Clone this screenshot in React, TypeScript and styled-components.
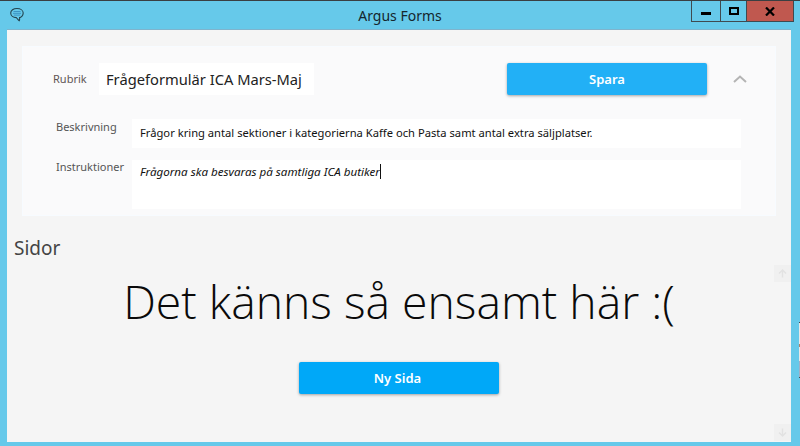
import React from "react";
import styled, { createGlobalStyle } from "styled-components";

const Global = createGlobalStyle`
  html, body { margin: 0; padding: 0; width: 800px; height: 446px; overflow: hidden; }
  body { font-family: "Noto Sans", "Open Sans", sans-serif; }
`;

const Frame = styled.div`
  position: relative;
  box-sizing: border-box;
  width: 800px;
  height: 446px;
  background: #66c9ea;
  border-top: 1px solid #3a3f42;
  display: flex;
  flex-direction: column;
  overflow: hidden;
`;

const EdgeSliver = styled.div`
  position: absolute;
  right: 0;
  top: 321px;
  width: 1px;
  height: 56px;
  box-sizing: border-box;
  background: linear-gradient(#e8e8e8 0 38%, #b0806a 38% 44%, #e8e8e8 44% 70%, #9fb0c8 70%);
  border-top: 1px solid #3f4a50;
  border-bottom: 1px solid #3f4a50;
`;

const TitleBar = styled.header`
  height: 29px;
  flex: none;
  display: grid;
  grid-template-columns: 1fr auto 1fr;
  align-items: start;
`;

const AppIcon = styled.svg`
  width: 16px;
  height: 16px;
  margin: 6px 0 0 9px;
  display: block;
`;

const Title = styled.div`
  font-size: 14px;
  line-height: 18px;
  margin-top: 6px;
  color: #15262e;
`;

const Controls = styled.div`
  justify-self: end;
  margin-right: 6px;
  display: flex;
  height: 21px;
  box-sizing: border-box;
  border: 1px solid #3f4a50;
  border-top: none;
`;

const Control = styled.div<{ $w: number; $close?: boolean }>`
  box-sizing: border-box;
  width: ${(p) => p.$w}px;
  background: ${(p) => (p.$close ? "#c0584f" : "transparent")};
  display: flex;
  align-items: center;
  justify-content: center;
  & + & { border-left: 1px solid #3f4a50; }
`;

const MinGlyph = styled.div`
  width: 10px;
  height: 3px;
  background: #000;
  margin-top: 5px;
`;

const MaxGlyph = styled.div`
  box-sizing: border-box;
  width: 10px;
  height: 8px;
  border: 2px solid #000;
  margin-top: -1px;
`;

const Content = styled.main`
  position: relative;
  margin: 0 9px 4px 7px;
  flex: 1;
  min-height: 0;
  background: #f5f5f5;
  box-shadow: 0 -1px 0 #7fb4cd;
  padding: 16px 15px 0;
  display: flex;
  flex-direction: column;
`;

const Panel = styled.section`
  box-sizing: border-box;
  height: 170px;
  background: #fafafb;
  border: 1px solid #f7fbff;
  padding: 16px 34px 0 0;
  display: flex;
  flex-direction: column;
`;

const TopRow = styled.div`
  display: flex;
  align-items: center;
  height: 32px;
`;

const Label = styled.label`
  font-size: 11px;
  line-height: 16px;
  color: #555;
`;

const RubrikLabel = styled(Label)`
  margin-left: 30px;
  width: 46px;
  flex: none;
  color: #5f5555;
`;

const TitleInput = styled.div`
  box-sizing: border-box;
  flex: none;
  width: 215px;
  height: 32px;
  background: #fff;
  padding: 0 7px;
  font-size: 14.7px;
  line-height: 32px;
  color: #222;
  white-space: nowrap;
`;

const SaveButton = styled.button<{ $bg?: string }>`
  flex: none;
  width: 200px;
  height: 32px;
  border: none;
  border-radius: 2px;
  background: ${(p) => p.$bg || "#22b0f6"};
  color: #fff;
  font: 600 13px "Noto Sans", sans-serif;
  box-shadow: 0 1px 3px rgba(0, 0, 0, 0.35);
  padding: 0;
`;

const SpaceSave = styled(SaveButton)`
  margin-left: 193px;
`;

const Chevron = styled.svg`
  flex: none;
  width: 14px;
  height: 8px;
  margin-left: 26px;
  display: block;
`;

const FieldRow = styled.div<{ $mt: number }>`
  display: flex;
  margin-top: ${(p) => p.$mt}px;
`;

const FieldLabel = styled(Label)<{ $shift: number }>`
  width: 76px;
  margin-left: 33px;
  margin-top: ${(p) => p.$shift}px;
  flex: none;
`;

const FieldBox = styled.div<{ $h: number; $italic?: boolean }>`
  box-sizing: border-box;
  flex: 1;
  height: ${(p) => p.$h}px;
  background: #fff;
  padding: ${(p) => (p.$italic ? 4 : 6)}px 8px;
  font-size: ${(p) => (p.$italic ? 11.6 : 11.2)}px;
  line-height: 16px;
  color: #111;
  font-style: ${(p) => (p.$italic ? "italic" : "normal")};
  white-space: nowrap;
`;

const Caret = styled.span`
  display: inline-block;
  width: 1px;
  height: 15px;
  background: #111;
  vertical-align: -3px;
`;

const SectionTitle = styled.h2`
  margin: 19px 0 0 -8px;
  font-size: 19px;
  line-height: 26px;
  font-weight: 400;
  color: #444;
`;

const Empty = styled.div`
  margin-top: 9px;
  display: flex;
  flex-direction: column;
  align-items: center;
`;

const EmptyText = styled.div`
  font-family: "Open Sans", "Noto Sans", sans-serif;
  font-weight: 300;
  font-size: 46.3px;
  line-height: 64px;
  color: #0a0a0a;
  white-space: nowrap;
`;

const NewButton = styled(SaveButton)`
  margin-top: 28px;
  padding-right: 3px;
`;

const ScrollBtn = styled.div<{ $top: number }>`
  position: absolute;
  right: 0;
  top: ${(p) => p.$top}px;
  width: 17px;
  height: 17px;
  background: #f0f0f0;
  display: flex;
  align-items: center;
  justify-content: center;
`;

const ScrollArrow = styled.svg<{ $down?: boolean }>`
  width: 9px;
  height: 9px;
  transform: ${(p) => (p.$down ? "rotate(180deg)" : "none")};
`;

const Arrow = ({ down }: { down?: boolean }) => (
  <ScrollArrow $down={down} viewBox="0 0 9 9">
    <path d="M4.500 8.500V1M1 4.500 4.500 1 8 4.500" fill="none" stroke="#e2e2e2" strokeWidth="1.400" />
  </ScrollArrow>
);

export default function App() {
  return (
    <>
      <Global />
      <Frame>
        <EdgeSliver />
        <TitleBar>
          <AppIcon viewBox="0 0 16 16">
            <path
              d="M8 1.500c3.600 0 6.200 2 6.200 4.600s-2.400 4.500-3.600 4.500c0 1.400.2 2.500-.3 3.200-.8-.4-1.800-2-3-3.200-3-.1-5.600-1.900-5.600-4.600S4.400 1.500 8 1.500Z"
              fill="none"
              stroke="#24444f"
              strokeWidth="1.100"
            />
            <path d="M4.500 4.500h7M4 6.300h8M4.800 8.100h6.400" stroke="#3d94c4" strokeWidth="1" />
          </AppIcon>
          <Title>Argus Forms</Title>
          <Controls>
            <Control $w={28}>
              <MinGlyph />
            </Control>
            <Control $w={26}>
              <MaxGlyph />
            </Control>
            <Control $w={47} $close>
              <svg width="10" height="9" viewBox="0 0 10 9">
                <path d="M1 .5 9 8.500M9 .5 1 8.500" stroke="#000" strokeWidth="2.200" />
              </svg>
            </Control>
          </Controls>
        </TitleBar>
        <Content>
          <Panel>
            <TopRow>
              <RubrikLabel>Rubrik</RubrikLabel>
              <TitleInput>Frågeformulär ICA Mars-Maj</TitleInput>
              <SpaceSave>Spara</SpaceSave>
              <Chevron viewBox="0 0 14 8">
                <path d="M1 7 7 1.500 13 7" fill="none" stroke="#b4b4b4" strokeWidth="2" />
              </Chevron>
            </TopRow>
            <FieldRow $mt={24}>
              <FieldLabel $shift={0}>Beskrivning</FieldLabel>
              <FieldBox $h={29}>
                Frågor kring antal sektioner i kategorierna Kaffe och Pasta samt antal extra säljplatser.
              </FieldBox>
            </FieldRow>
            <FieldRow $mt={12}>
              <FieldLabel $shift={-1}>Instruktioner</FieldLabel>
              <FieldBox $h={49} $italic>
                Frågorna ska besvaras på samtliga ICA butiker
                <Caret />
              </FieldBox>
            </FieldRow>
          </Panel>
          <SectionTitle>Sidor</SectionTitle>
          <Empty>
            <EmptyText>Det känns så ensamt här :(</EmptyText>
            <NewButton $bg="#00a8f8">Ny Sida</NewButton>
          </Empty>
          <ScrollBtn $top={235}>
            <Arrow />
          </ScrollBtn>
          <ScrollBtn $top={394}>
            <Arrow down />
          </ScrollBtn>
        </Content>
      </Frame>
    </>
  );
}
